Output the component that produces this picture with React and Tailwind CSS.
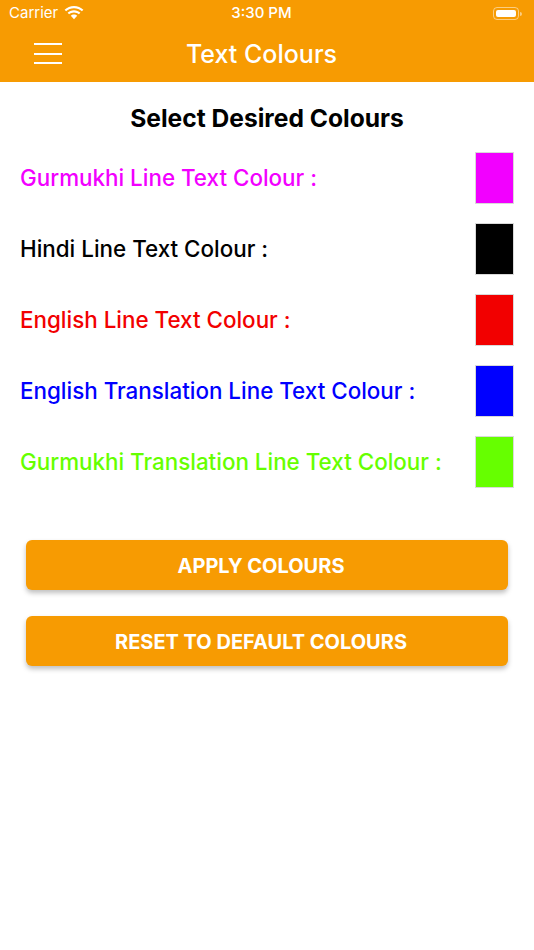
import React from "react";

const rows = [
  { label: "Gurmukhi Line Text Colour :", color: "#F200FF" },
  { label: "Hindi Line Text Colour :", color: "#000000" },
  { label: "English Line Text Colour :", color: "#F20000" },
  { label: "English Translation Line Text Colour :", color: "#0000FF" },
  { label: "Gurmukhi Translation Line Text Colour :", color: "#66FF00" },
];

function Wifi() {
  return (
    <svg width="20" height="15" viewBox="0 0 20 15" fill="white">
      <path d="M10 2.2c3 0 5.8 1.1 7.9 3.1l1.5-1.6C16.9 1.4 13.6 0 10 0S3.1 1.4.6 3.7l1.5 1.6C4.2 3.3 7 2.2 10 2.2z" />
      <path d="M10 6.4c1.9 0 3.6.7 4.9 1.9l1.5-1.6C14.7 5.1 12.5 4.2 10 4.2S5.3 5.1 3.6 6.7l1.5 1.6C6.4 7.1 8.1 6.4 10 6.4z" />
      <path d="M10 8.4c1.3 0 2.4.5 3.2 1.3L10 13.2 6.8 9.7C7.6 8.9 8.7 8.4 10 8.4z" />
    </svg>
  );
}

export default function App() {
  return (
    <div
      className="w-[534px] h-[950px] bg-white flex flex-col"
      style={{ fontFamily: "Inter, 'Noto Sans', sans-serif" }}
    >
      <div className="bg-[#F79B02] flex flex-col">
        <div className="h-[27px] flex items-center justify-between px-[9px] text-white text-[15px]">
          <div className="flex items-center gap-[6px] w-[120px]">
            <span>Carrier</span>
            <Wifi />
          </div>
          <span className="font-medium pr-[11px]">3:30 PM</span>
          <div className="w-[120px] flex justify-end items-center pr-[3px]">
            <div className="w-[26px] h-[13px] rounded-[4px] border border-white/50 p-[2px]">
              <div className="w-full h-full bg-white rounded-[2px]" />
            </div>
            <div className="w-[1.5px] h-[4px] bg-white/50 rounded-r ml-[1px]" />
          </div>
        </div>
        <div className="h-[55px] flex items-center relative">
          <div className="absolute left-[34px] top-[16px] flex flex-col gap-[7.5px]">
            <div className="w-[28px] h-[2px] bg-white" />
            <div className="w-[28px] h-[2px] bg-white" />
            <div className="w-[28px] h-[2px] bg-white" />
          </div>
          <div className="flex-1 text-center text-white text-[25px] font-medium pr-[11px]">
            Text Colours
          </div>
        </div>
      </div>

      <div className="mt-[21px] text-center text-black text-[24.6px] font-bold leading-[30px]">
        Select Desired Colours
      </div>

      <div className="mt-[19px] flex flex-col gap-[19px] pl-[20px] pr-[20px]">
        {rows.map((r) => (
          <div key={r.label} className="flex items-center justify-between">
            <span className="text-[22.4px] font-medium" style={{ color: r.color }}>
              {r.label}
            </span>
            <div
              className="w-[39px] h-[52px] border border-[#d9d9d9]"
              style={{ backgroundColor: r.color }}
            />
          </div>
        ))}
      </div>

      <div className="mt-[52px] mx-[26px] flex flex-col gap-[26px]">
        <button className="h-[50px] rounded-[6px] bg-[#F79B02] text-white text-[20px] font-bold pr-[12px] pt-[1px] shadow-[0_3px_5px_rgba(0,0,0,0.25)]">
          APPLY COLOURS
        </button>
        <button className="h-[50px] rounded-[6px] bg-[#F79B02] text-white text-[20px] font-bold pr-[12px] pt-[1px] shadow-[0_3px_5px_rgba(0,0,0,0.25)]">
          RESET TO DEFAULT COLOURS
        </button>
      </div>
    </div>
  );
}
